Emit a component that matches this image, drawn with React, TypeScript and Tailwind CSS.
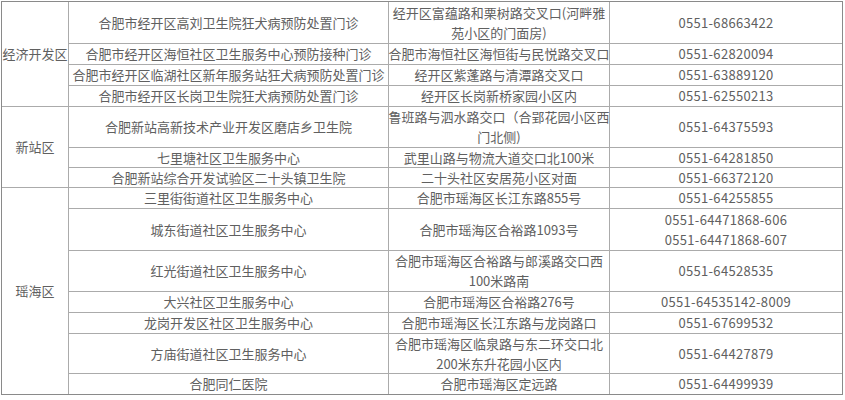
import React from "react";

type Row = { name: string; addr: string[]; phone: string[] };

const rows: Row[] = [
  { name: "合肥市经开区高刘卫生院狂犬病预防处置门诊", addr: ["经开区富蕴路和栗树路交叉口(河畔雅", "苑小区的门面房)"], phone: ["0551-68663422"] },
  { name: "合肥市经开区海恒社区卫生服务中心预防接种门诊", addr: ["合肥市海恒社区海恒街与民悦路交叉口"], phone: ["0551-62820094"] },
  { name: "合肥市经开区临湖社区新年服务站狂犬病预防处置门诊", addr: ["经开区紫蓬路与清潭路交叉口"], phone: ["0551-63889120"] },
  { name: "合肥市经开区长岗卫生院狂犬病预防处置门诊", addr: ["经开区长岗新桥家园小区内"], phone: ["0551-62550213"] },
  { name: "合肥新站高新技术产业开发区磨店乡卫生院", addr: ["鲁班路与泗水路交口（合郢花园小区西", "门北侧)"], phone: ["0551-64375593"] },
  { name: "七里塘社区卫生服务中心", addr: ["武里山路与物流大道交口北100米"], phone: ["0551-64281850"] },
  { name: "合肥新站综合开发试验区二十头镇卫生院", addr: ["二十头社区安居苑小区对面"], phone: ["0551-66372120"] },
  { name: "三里街街道社区卫生服务中心", addr: ["合肥市瑶海区长江东路855号"], phone: ["0551-64255855"] },
  { name: "城东街道社区卫生服务中心", addr: ["合肥市瑶海区合裕路1093号"], phone: ["0551-64471868-606", "0551-64471868-607"] },
  { name: "红光街道社区卫生服务中心", addr: ["合肥市瑶海区合裕路与郎溪路交口西", "100米路南"], phone: ["0551-64528535"] },
  { name: "大兴社区卫生服务中心", addr: ["合肥市瑶海区合裕路276号"], phone: ["0551-64535142-8009"] },
  { name: "龙岗开发区社区卫生服务中心", addr: ["合肥市瑶海区长江东路与龙岗路口"], phone: ["0551-67699532"] },
  { name: "方庙街道社区卫生服务中心", addr: ["合肥市瑶海区临泉路与东二环交口北", "200米东升花园小区内"], phone: ["0551-64427879"] },
  { name: "合肥同仁医院", addr: ["合肥市瑶海区定远路"], phone: ["0551-64499939"] },
];

const cell =
  "bg-white flex flex-col items-center justify-center text-center whitespace-nowrap leading-[20px]";

function Lines({ items }: { items: string[] }) {
  return (
    <>
      {items.map((t, i) => (
        <span key={i} className="block">
          {t}
        </span>
      ))}
    </>
  );
}

export default function App() {
  const districts: Record<number, { label: string; span: string }> = {
    0: { label: "经济开发区", span: "row-span-4" },
    4: { label: "新站区", span: "row-span-3" },
    7: { label: "瑶海区", span: "row-span-7" },
  };
  return (
    <div className="w-[845px] h-[400px] bg-white overflow-hidden">
      <div
        className="ml-px mt-px w-[842px] grid grid-cols-[66px_319px_220px_232px] grid-rows-[41px_20px_20px_20px_40px_19px_19px_20px_41px_40px_20px_20px_39px_20px] gap-px bg-[#ababab] border border-[#8a8a8a] text-[13px] text-[#606060]"
        style={{ fontFamily: '"Noto Sans CJK SC", "Noto Sans", sans-serif' }}
      >
        {rows.map((r, i) => (
          <React.Fragment key={i}>
            {districts[i] && (
              <div className={`${cell} ${districts[i].span}`}>{districts[i].label}</div>
            )}
            <div className={`${cell} col-start-2`}>{r.name}</div>
            <div className={cell}>
              <Lines items={r.addr} />
            </div>
            <div className={`${cell} tracking-[0.3px]`}>
              <Lines items={r.phone} />
            </div>
          </React.Fragment>
        ))}
      </div>
    </div>
  );
}
